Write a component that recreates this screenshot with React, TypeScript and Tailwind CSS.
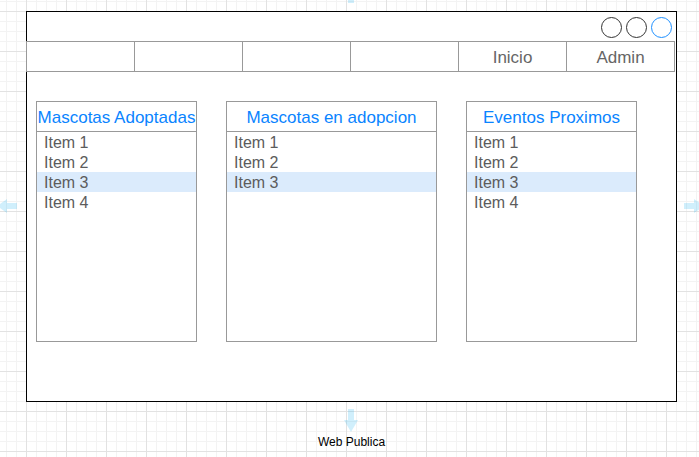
const PANELS = [
  { title: 'Mascotas Adoptadas', width: 'w-[161px]', items: ['Item 1', 'Item 2', 'Item 3', 'Item 4'] },
  { title: 'Mascotas en adopcion', width: 'w-[211px]', items: ['Item 1', 'Item 2', 'Item 3'] },
  { title: 'Eventos Proximos', width: 'w-[171px]', items: ['Item 1', 'Item 2', 'Item 3', 'Item 4'] },
];

const NAV = ['', '', '', '', 'Inicio', 'Admin'];

function ListPanel({ title, width, items }: { title: string; width: string; items: string[] }) {
  return (
    <div className={`${width} h-[241px] border border-[#999] bg-white`}>
      <div className="h-[30px] border-b border-[#999] text-center text-[17px] leading-[31px] text-[#0a84ff] whitespace-nowrap">
        {title}
      </div>
      <ul>
        {items.map((item, idx) => (
          <li
            key={item}
            className={`h-[20px] pl-[7px] text-[16px] leading-[22px] text-[#5c5c5c] ${idx === 2 ? 'bg-[#dbebfc]' : ''}`}
          >
            {item}
          </li>
        ))}
      </ul>
    </div>
  );
}

export default function App() {
  return (
    <div
      className="relative w-[699px] h-[457px] overflow-hidden bg-white font-['Liberation_Sans',Arial,sans-serif] bg-[linear-gradient(to_right,#e2e2e2_1px,transparent_1px),linear-gradient(to_bottom,#e2e2e2_1px,transparent_1px),linear-gradient(to_right,#f3f3f3_1px,transparent_1px),linear-gradient(to_bottom,#f3f3f3_1px,transparent_1px)] bg-[size:40px_40px,40px_40px,10px_10px,10px_10px] bg-[position:26px_11px]"
    >
      {/* Window */}
      <div className="ml-[26px] mt-[11px] w-[651px] h-[391px] border border-black bg-white">
        {/* Title bar */}
        <div className="h-[29px] flex justify-end items-start gap-[4px] pt-[5px] pr-[4px]">
          <div className="w-[21px] h-[21px] rounded-full border border-[#333]" />
          <div className="w-[21px] h-[21px] rounded-full border border-[#333]" />
          <div className="w-[21px] h-[21px] rounded-full border border-[#1e90ff]" />
        </div>

        {/* Nav */}
        <div className="relative -ml-px w-[649px] h-[31px] flex border-y border-[#999] bg-white">
          {NAV.map((label, idx) => (
            <div
              key={idx}
              className={`h-full border-l border-[#999] text-center text-[17px] leading-[31px] text-[#666] ${idx === NAV.length - 1 ? 'w-[109px] border-r' : 'w-[108px]'}`}
            >
              {label}
            </div>
          ))}
        </div>

        {/* Lists */}
        <div className="flex gap-[29px] pl-[9px] pt-[29px]">
          {PANELS.map((p) => (
            <ListPanel key={p.title} {...p} />
          ))}
        </div>
      </div>

      <div className="ml-[26px] mt-[33px] w-[651px] text-center text-[12px] leading-[14px] text-black">
        Web Publica
      </div>

      {/* hover arrows */}
      <svg className="absolute left-0 top-0" width="699" height="457" viewBox="0 0 699 457">
        <g fill="#29b6f2" fillOpacity="0.22">
          <rect x="348" y="0" width="6" height="3" />
          <polygon points="348,409 354,409 354,420 358,420 351,432 344,420 348,420" />
          <polygon points="17,203 17,209 7,209 7,213 -3,206 7,199 7,203" />
          <polygon points="684,203 694,203 694,199 704,206 694,213 694,209 684,209" />
        </g>
      </svg>
    </div>
  );
}
